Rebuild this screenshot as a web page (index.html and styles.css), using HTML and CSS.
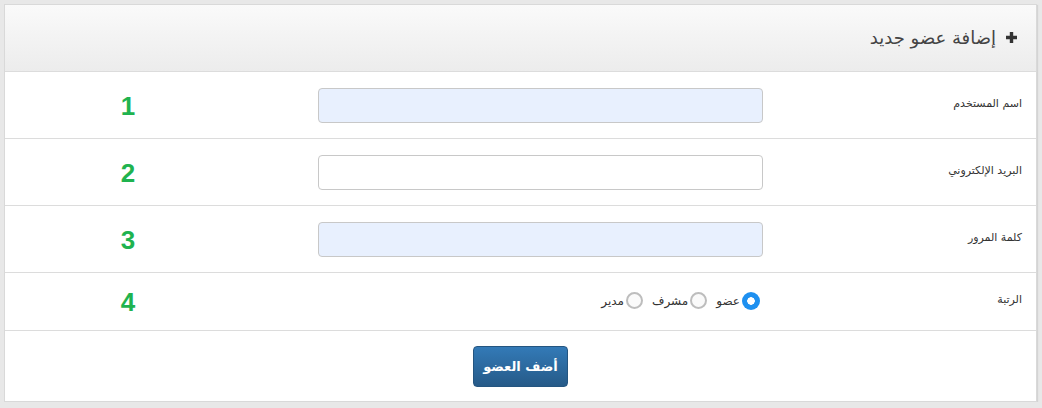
FILE: index.html
```html
<!DOCTYPE html>
<html lang="ar">
<head>
<meta charset="utf-8">
<title>إضافة عضو جديد</title>
<link rel="stylesheet" href="styles.css">
</head>
<body>
<div class="panel" dir="rtl">
  <div class="panel-heading">
    <svg class="plus" width="11" height="11" viewBox="0 0 11 11"><path d="M3.8 0h3.4v3.8H11v3.4H7.2V11H3.8V7.2H0V3.8h3.8z" fill="#333"/></svg>
    <span class="title">إضافة عضو جديد</span>
  </div>
  <div class="row">
    <div class="label">اسم المستخدم</div>
    <div class="field"><div class="input autofill"></div></div>
    <div class="num">1</div>
  </div>
  <div class="row">
    <div class="label">البريد الإلكتروني</div>
    <div class="field"><div class="input"></div></div>
    <div class="num">2</div>
  </div>
  <div class="row">
    <div class="label">كلمة المرور</div>
    <div class="field"><div class="input autofill"></div></div>
    <div class="num">3</div>
  </div>
  <div class="row row-radio">
    <div class="label">الرتبة</div>
    <div class="field radios">
      <span class="opt"><span class="radio checked"></span><span class="opt-text">عضو</span></span>
      <span class="opt"><span class="radio"></span><span class="opt-text">مشرف</span></span>
      <span class="opt"><span class="radio"></span><span class="opt-text">مدير</span></span>
    </div>
    <div class="num">4</div>
  </div>
  <div class="footer">
    <button class="btn">أضف العضو</button>
  </div>
</div>
</body>
</html>
```
FILE: styles.css
```css
html, body {
  margin: 0;
  padding: 0;
}
body {
  background: #e8e8e8;
  padding: 4px 0 0 4px;
  font-family: "DejaVu Sans", sans-serif;
}
.panel {
  width: 1031px;
  height: 396px;
  background: #fff;
  border: 1px solid #d9d9d9;
  box-shadow: 1px 1px 1px #d4d4d4;
  display: flex;
  flex-direction: column;
}
.panel-heading {
  height: 66px;
  border-bottom: 1px solid #dcdcdc;
  background: linear-gradient(#fafafa, #ececec);
  display: flex;
  align-items: center;
  padding-right: 19px;
  gap: 10px;
  color: #444;
  flex: none;
}
.plus { display: block; margin-top: -2px; }
.title {
  font-size: 18px;
  line-height: 22px;
  color: #444;
}
.row {
  display: grid;
  grid-template-columns: 258px 527px 1fr;
  height: 66px;
  border-bottom: 1px solid #dcdcdc;
  align-items: center;
  flex: none;
}
.row-radio { height: 57px; }
.label {
  padding-right: 14px;
  font-size: 11px;
  color: #333;
  margin-top: -4px;
}
.field {
  padding-right: 15px;
  display: flex;
}
.input {
  width: 443px;
  height: 33px;
  border: 1px solid #c8c8c8;
  border-radius: 4px;
  background: #fff;
  margin-top: 1px;
}
.input.autofill { background: #e8f0fe; }
.num {
  text-align: center;
  font-family: "Liberation Sans", Arial, sans-serif;
  font-weight: bold;
  font-size: 26px;
  color: #1fb34f;
  margin-top: 2px;
}
.radios {
  padding-right: 18px;
  gap: 9px;
  align-items: center;
  margin-top: -2px;
}
.opt {
  display: flex;
  align-items: center;
  gap: 2px;
  font-size: 12px;
  color: #333;
}
.radio {
  width: 13px;
  height: 13px;
  border: 2px solid #bdbdbd;
  border-radius: 50%;
  background: #fafafa;
  box-sizing: content-box;
}
.radio.checked {
  width: 18px;
  height: 18px;
  border: 0;
  background: radial-gradient(circle, #fff 0 3.5px, #1e90f0 4px);
}
.footer {
  flex: 1;
  display: flex;
  justify-content: center;
  align-items: flex-start;
  padding-top: 15px;
}
.btn {
  width: 95px;
  height: 41px;
  border: 1px solid #245580;
  border-radius: 4px;
  background: linear-gradient(#337ab7, #265a88);
  color: #fff;
  font-family: "DejaVu Sans", sans-serif;
  font-weight: bold;
  font-size: 13px;
  padding: 0;
}
```
